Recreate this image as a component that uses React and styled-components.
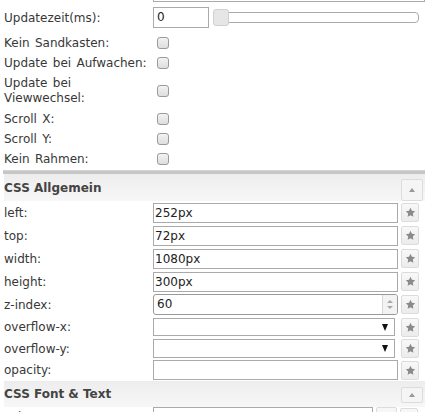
import React from "react";
import styled, { createGlobalStyle } from "styled-components";

const GlobalStyle = createGlobalStyle`
  html, body {
    margin: 0;
    padding: 0;
    background: #fff;
  }
  body {
    font-family: "DejaVu Sans", Verdana, sans-serif;
    font-size: 12px;
    color: #333;
  }
`;

const Panel = styled.div`
  width: 421px;
  padding-left: 4px;
`;

// bottom edge of the input scrolled out of view above
const CutInput = styled.div`
  margin-left: 149px;
  width: 270px;
  height: 1px;
  border: 1px solid #aaa;
  border-top: none;
`;

const Row = styled.div`
  display: grid;
  grid-template-columns: 149px 1fr;
  align-items: center;
  height: ${(p) => p.h || 20}px;
`;

const Label = styled.div`
  line-height: ${(p) => (p.tall ? 15 : 14)}px;
  color: #383838;
  word-spacing: 1.5px;
  white-space: ${(p) => (p.tall ? "normal" : "nowrap")};
`;

const Field = styled.div`
  display: flex;
  align-items: center;
  gap: ${(p) => p.gap ?? 3}px;
`;

const TextInput = styled.div`
  box-sizing: border-box;
  width: ${(p) => p.w || 245}px;
  height: ${(p) => p.h || 20}px;
  border: 1px solid #aaa;
  background: #fff;
  padding-left: ${(p) => p.pad ?? 1}px;
  line-height: ${(p) => (p.h || 20) - 2}px;
  color: #222;
  font-size: 12px;
`;

const NumberBox = styled.div`
  box-sizing: border-box;
  width: 245px;
  height: 21px;
  border: 1px solid #999;
  border-radius: 3px;
  background: #fff;
  display: flex;
  align-items: stretch;
  color: #222;
`;

const NumberText = styled.div`
  flex: 1;
  padding-left: 3px;
  line-height: 19px;
`;

const Spinner = styled.div`
  width: 14px;
  display: flex;
  flex-direction: column;
  align-items: center;
  justify-content: center;
  gap: 3px;
  background: #f3f3f3;
  border-left: 1px solid #d6d6d6;
  border-radius: 0 2px 2px 0;
`;

const Tri = styled.div`
  width: 0;
  height: 0;
  border-left: 3.5px solid transparent;
  border-right: 3.5px solid transparent;
  ${(p) =>
    p.down
      ? "border-top: 3.5px solid #a8a8a8;"
      : "border-bottom: 3.5px solid #a8a8a8;"}
`;

const SelectBox = styled.div`
  box-sizing: border-box;
  width: 242px;
  height: ${(p) => p.h || 19}px;
  border: 1px solid #aaa;
  background: #fff;
  display: flex;
  align-items: center;
  justify-content: flex-end;
  padding-right: 6px;
  margin-right: 3px;
`;

const Arrow = styled.div`
  width: 0;
  height: 0;
  border-left: 3.5px solid transparent;
  border-right: 3.5px solid transparent;
  border-top: 7px solid #111;
`;

const IconButton = styled.div`
  box-sizing: border-box;
  width: ${(p) => p.w || 18}px;
  height: ${(p) => p.h || 19}px;
  border: 1px solid #dcdcdc;
  border-radius: 2px;
  background: linear-gradient(#f8f8f8, #ececec);
  display: flex;
  align-items: center;
  justify-content: center;
  flex: none;
`;

const Star = () => (
  <svg width="11" height="11" viewBox="0 0 24 24">
    <path
      d="M12 1.8l3.1 6.6 7.1.9-5.2 4.9 1.3 7.1L12 17.8l-6.3 3.5 1.3-7.1L1.8 9.3l7.1-.9z"
      fill="#8a8a8a"
    />
  </svg>
);

const StarButton = () => (
  <IconButton>
    <Star />
  </IconButton>
);

const Checkbox = styled.div`
  box-sizing: border-box;
  width: 12px;
  height: 12px;
  margin-left: 4px;
  border: 1px solid #9a9a9a;
  border-radius: 3px;
  background: linear-gradient(#f2f2f2, #dedede);
`;

const SliderTrack = styled.div`
  position: relative;
  box-sizing: border-box;
  width: 206px;
  height: 11px;
  border: 1px solid #aaa;
  border-radius: 4px;
  background: #fff;
`;

const SliderHandle = styled.div`
  position: absolute;
  left: -1px;
  top: -4px;
  box-sizing: border-box;
  width: 16px;
  height: 17px;
  border: 1px solid #d0d0d0;
  border-radius: 3px;
  background: #e6e6e6;
`;

const Divider = styled.div`
  height: 4px;
  margin-top: 1px;
  width: 422px;
  margin-left: -1px;
  background: #c6c6c6;
  border-top: 1px solid #d4d4d4;
  box-sizing: border-box;
`;

const Header = styled.div`
  display: flex;
  align-items: center;
  justify-content: space-between;
  height: ${(p) => p.h || 27}px;
  width: 421px;
  background: linear-gradient(#ededed, #f7f7f7);
  font-weight: bold;
  color: #444;
  padding-right: 2px;
  box-sizing: border-box;
`;

const CollapseButton = styled(IconButton)`
  background: #f5f5f5;
  margin-top: ${(p) => p.mt || 0}px;
`;

const UpArrow = styled.div`
  width: 0;
  height: 0;
  border-left: 3.5px solid transparent;
  border-right: 3.5px solid transparent;
  border-bottom: 4px solid #999;
`;

const checkboxes = [
  { label: "Kein Sandkasten:" },
  { label: "Update bei Aufwachen:" },
  { label: "Update bei Viewwechsel:", tall: true },
  { label: "Scroll X:" },
  { label: "Scroll Y:" },
  { label: "Kein Rahmen:" },
];

const cssRows = [
  { label: "left:", value: "252px" },
  { label: "top:", value: "72px" },
  { label: "width:", value: "1080px" },
  { label: "height:", value: "300px" },
];

export default function App() {
  return (
    <>
      <GlobalStyle />
      <Panel>
        <CutInput />
        <Row h={31}>
          <Label>Updatezeit(ms):</Label>
          <Field gap={4}>
            <TextInput w={56} h={21} pad={3}>
              0
            </TextInput>
            <SliderTrack>
              <SliderHandle />
            </SliderTrack>
          </Field>
        </Row>
        {checkboxes.map((c) => (
          <Row key={c.label} h={c.tall ? 36 : 20}>
            <Label tall={c.tall}>{c.label}</Label>
            <Field>
              <Checkbox />
            </Field>
          </Row>
        ))}
        <Divider />
        <Header>
          <span>CSS Allgemein</span>
          <CollapseButton w={22} h={22} mt={4}>
            <UpArrow />
          </CollapseButton>
        </Header>
        {cssRows.map((r) => (
          <Row key={r.label} h={23}>
            <Label>{r.label}</Label>
            <Field>
              <TextInput>{r.value}</TextInput>
              <StarButton />
            </Field>
          </Row>
        ))}
        <Row h={23}>
          <Label>z-index:</Label>
          <Field>
            <NumberBox>
              <NumberText>60</NumberText>
              <Spinner>
                <Tri />
                <Tri down />
              </Spinner>
            </NumberBox>
            <StarButton />
          </Field>
        </Row>
        <Row h={22}>
          <Label>overflow-x:</Label>
          <Field>
            <SelectBox h={18}>
              <Arrow />
            </SelectBox>
            <StarButton />
          </Field>
        </Row>
        <Row h={21}>
          <Label>overflow-y:</Label>
          <Field>
            <SelectBox>
              <Arrow />
            </SelectBox>
            <StarButton />
          </Field>
        </Row>
        <Row h={22}>
          <Label>opacity:</Label>
          <Field>
            <TextInput />
            <StarButton />
          </Field>
        </Row>
        <Header h={26}>
          <span>CSS Font &amp; Text</span>
          <CollapseButton w={22} h={16} mt={2}>
            <UpArrow />
          </CollapseButton>
        </Header>
        <Row h={20}>
          <Label>color:</Label>
          <Field>
            <TextInput w={220} />
            <IconButton w={21} h={20} />
            <StarButton />
          </Field>
        </Row>
      </Panel>
    </>
  );
}
